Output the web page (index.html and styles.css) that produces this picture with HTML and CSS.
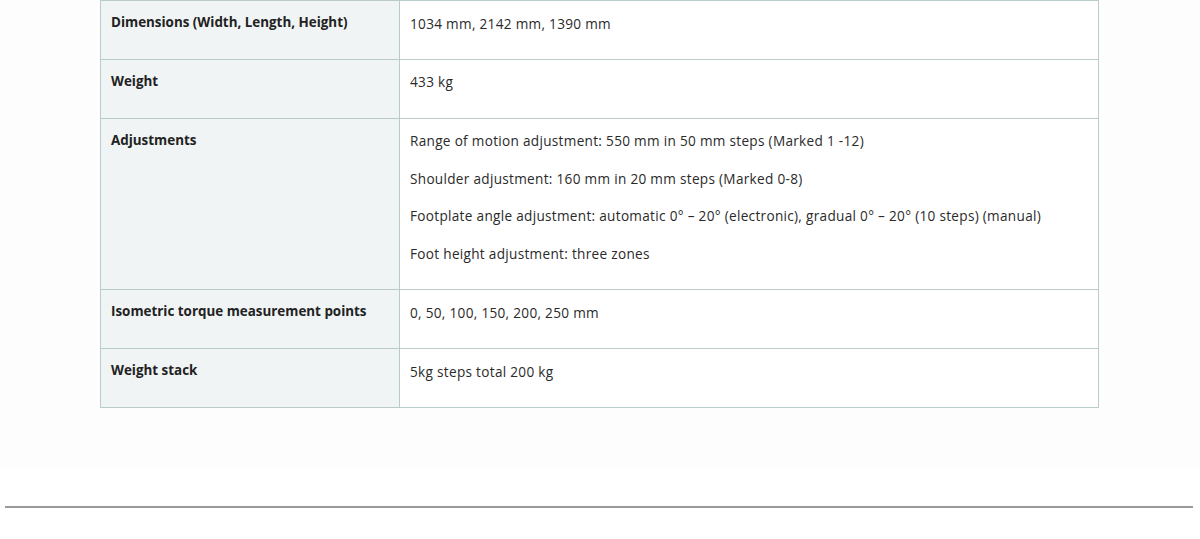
FILE: index.html
```html
<!DOCTYPE html>
<html>
<head>
<meta charset="utf-8">
<link rel="stylesheet" href="styles.css">
</head>
<body>
<section class="specs">
  <table class="spec-table">
    <tr>
      <th>Dimensions (Width, Length, Height)</th>
      <td><p>1034 mm, 2142 mm, 1390 mm</p></td>
    </tr>
    <tr>
      <th>Weight</th>
      <td><p>433 kg</p></td>
    </tr>
    <tr>
      <th>Adjustments</th>
      <td>
        <p>Range of motion adjustment: 550 mm in 50 mm steps (Marked 1 -12)</p>
        <p>Shoulder adjustment: 160 mm in 20 mm steps (Marked 0-8)</p>
        <p>Footplate angle adjustment: automatic 0° – 20° (electronic), gradual 0° – 20° (10 steps) (manual)</p>
        <p>Foot height adjustment: three zones</p>
      </td>
    </tr>
    <tr>
      <th>Isometric torque measurement points</th>
      <td><p>0, 50, 100, 150, 200, 250 mm</p></td>
    </tr>
    <tr>
      <th>Weight stack</th>
      <td><p>5kg steps total 200 kg</p></td>
    </tr>
  </table>
</section>
<footer class="footer">
  <hr class="rule">
</footer>
</body>
</html>
```
FILE: styles.css
```css
html, body {
  margin: 0;
  padding: 0;
  background: #ffffff;
}
body {
  font-family: "Open Sans", "Noto Sans", sans-serif;
  font-size: 13.4px;
  color: #2a2a2a;
}
.specs {
  background: #fdfdfd;
  padding: 0 100px 61px;
}
.spec-table {
  width: 999px;
  border-collapse: collapse;
  border: 1px solid #b9cccc;
}
.spec-table th,
.spec-table td {
  border: 1px solid #b9cccc;
  vertical-align: top;
  text-align: left;
  line-height: 22px;
}
.spec-table th {
  width: 278px;
  background: #f0f4f4;
  font-weight: 700;
  padding: 10px 10px 9px;
  color: #222;
}
.spec-table td {
  background: #ffffff;
  padding: 11.5px 10px 9.1px;
  font-size: 13.6px;
  letter-spacing: 0.3px;
}
.spec-table p {
  margin: 0 0 15.4px;
}
.footer {
  padding: 37px 7px 0 5px;
}
.rule {
  margin: 0;
  border: 0;
  height: 2px;
  background: #9a9a9a;
}
```
